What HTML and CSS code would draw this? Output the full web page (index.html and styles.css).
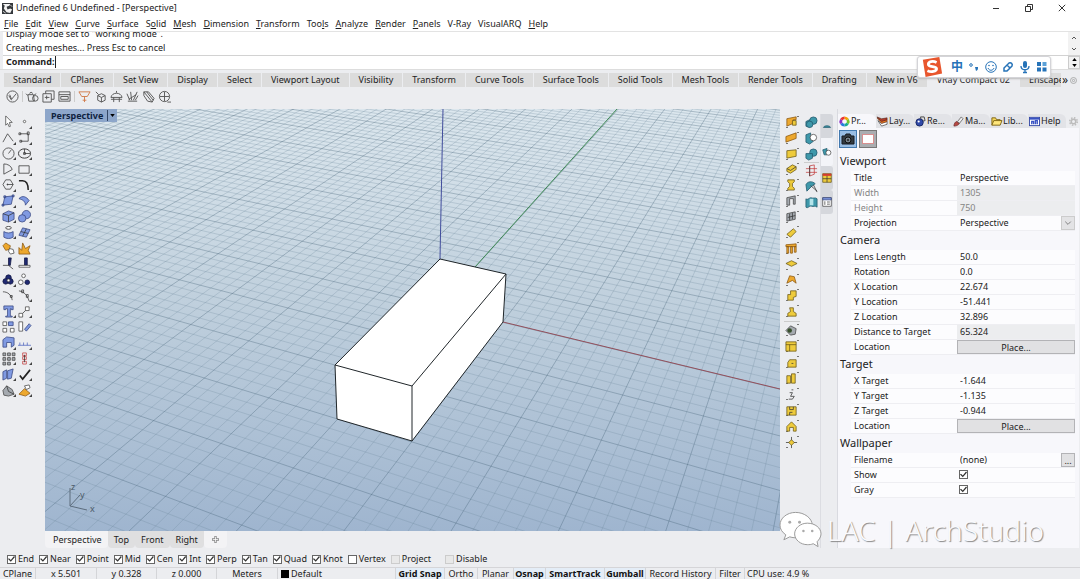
FILE: index.html
```html
<!DOCTYPE html>
<html lang="en">
<head>
<meta charset="utf-8">
<title>Undefined 6 Undefined - [Perspective]</title>
<link rel="stylesheet" href="styles.css">
</head>
<body>
<header class="titlebar">
  <svg class="app-icon" viewBox="0 0 12 12"><rect width="12" height="12" fill="#34383c"/><path d="M1 1l2 2-1 3 3 4 4 1 2-4-2-1-3 1-1-3 3-1 1-2" fill="#f4f4f4"/><path d="M1 9l3 2M9 2l2 2" stroke="#ddd"/></svg>
  <h1>Undefined 6 Undefined - [Perspective]</h1>
  <div class="win-buttons">
    <button aria-label="Minimize"><svg viewBox="0 0 8 8"><path d="M1 4.500h6"/></svg></button>
    <button aria-label="Restore"><svg viewBox="0 0 8 8"><path d="M.5 2.500h5v5h-5zM2.500 2.500v-2h5v5h-2"/></svg></button>
    <button aria-label="Close"><svg viewBox="0 0 8 8"><path d="M.8.8l6.400 6.400M7.200.8L.8 7.200"/></svg></button>
  </div>
</header>
<nav class="menubar">
  <button><u>F</u>ile</button><button><u>E</u>dit</button><button><u>V</u>iew</button><button><u>C</u>urve</button><button><u>S</u>urface</button><button>S<u>o</u>lid</button><button><u>M</u>esh</button><button><u>D</u>imension</button><button><u>T</u>ransform</button><button>Too<u>l</u>s</button><button><u>A</u>nalyze</button><button><u>R</u>ender</button><button><u>P</u>anels</button><button>V-Ray</button><button>VisualARQ</button><button><u>H</u>elp</button>
</nav>
<section class="console">
  <div class="history">
    <div class="history-lines"><p>Display mode set to "working mode".</p><p>Creating meshes... Press Esc to cancel</p></div>
    <div class="scroller"><svg viewBox="0 0 6 4"><path d="M1 3l2-2 2 2"/></svg><svg viewBox="0 0 6 4"><path d="M1 1l2 2 2-2"/></svg></div>
  </div>
  <div class="command">
    <label for="cmd">Command:</label><span class="caret"></span><input id="cmd" type="text">
    <div class="spinner"><svg viewBox="0 0 6 4"><path d="M0 4l3-4 3 4z"/></svg><svg viewBox="0 0 6 4"><path d="M0 0l3 4 3-4z"/></svg></div>
  </div>
</section>
<div class="toolbar-tabs">
  <button>Standard</button><button>CPlanes</button><button>Set View</button><button>Display</button><button>Select</button><button>Viewport Layout</button><button>Visibility</button><button>Transform</button><button>Curve Tools</button><button>Surface Tools</button><button>Solid Tools</button><button>Mesh Tools</button><button>Render Tools</button><button>Drafting</button><button>New in V6</button><button class="active">VRay Compact 02</button><button class="last">Enscape</button>
  <span class="more">»</span>
  <svg class="gear" viewBox="0 0 12 12"><circle cx="6" cy="6" r="4" /><circle cx="6" cy="6" r="1.500"/></svg>
</div>
<div class="toolbar" id="vray"></div>
<main class="workspace">
  <div class="palette" id="left"></div>
  <section class="stage">
    <div class="viewport">
      <svg class="scene" id="scene" viewBox="0 0 735 422" preserveAspectRatio="xMidYMid slice">
        <defs><linearGradient id="sky" x1="0" y1="0" x2="0" y2="1"><stop offset="0" stop-color="#dce7ee"/><stop offset=".45" stop-color="#c0d0dd"/><stop offset="1" stop-color="#9fb5cf"/></linearGradient></defs>
        <rect width="735" height="422" fill="url(#sky)"/>
        <path id="minor" class="minor"/>
        <path id="major" class="major"/>
        <path class="axis-z" d="M395 150L398 0"/>
        <path class="axis-y" d="M430 158L572 0"/>
        <path class="axis-x" d="M458 213L735 280"/>
        <path class="box" d="M395 150L461 165L458 213L367 332L292 310L290 256Z"/>
        <path class="box" d="M290 256L367 277L461 165M367 277V332"/>
        <path class="gizmo" d="M25 379v18l17 4M25 397l10-11"/>
        <text x="26" y="381">z</text><text x="35" y="389">y</text><text x="45" y="403">x</text>
      </svg>
      <div class="view-title"><button>Perspective</button><button class="drop" aria-label="Viewport menu"><svg viewBox="0 0 6 4"><path d="M0 0h6l-3 4z"/></svg></button></div>
    </div>
    <div class="view-tabs"><button class="active">Perspective</button><button>Top</button><button>Front</button><button>Right</button><button class="active add" aria-label="Add viewport"><svg viewBox="0 0 9 9"><path d="M4.500 0v9M0 4.500h9" stroke="#888" stroke-width="3"/><path d="M4.500 1v7M1 4.500h7" stroke="#fff"/></svg></button></div>
  </section>
  <aside class="side-tools">
    <div class="col col-a"><div class="group g13" id="arq1"></div><div class="group g8" id="arq2"></div></div>
    <div class="col col-b"><div class="group g3" id="sol1"></div><div class="group g3" id="sol2"></div></div>
    <div class="col col-c" id="side-tabs"></div>
  </aside>
  <aside class="panel">
    <div class="panel-tabs">
      <button class="active"><svg viewBox="0 0 12 12"><g fill="none" stroke-width="3"><path d="M6 2a4 4 0 0 1 3.500 2" stroke="#f5a000"/><path d="M9.500 4a4 4 0 0 1 0 4" stroke="#79c52c"/><path d="M9.500 8A4 4 0 0 1 6 10" stroke="#19ad91"/><path d="M6 10a4 4 0 0 1-3.500-2" stroke="#247ce0"/><path d="M2.500 8a4 4 0 0 1 0-4" stroke="#8c32c4"/><path d="M2.500 4A4 4 0 0 1 6 2" stroke="#e93434"/></g></svg>Pr...</button>
      <button><svg viewBox="0 0 12 12"><path d="M1 5l4 6 6-2V6l-6 2z" fill="#fff" stroke="#333" stroke-width=".7"/><path d="M0 2l5 6 6-2V4L5 5z" fill="#f47b20" stroke="#6b2d14" stroke-width=".6"/><path d="M0 1l5 5 6-2V2L5 3z" fill="#b23c2c" stroke="#472016" stroke-width=".6"/></svg>Lay...</button>
      <button><svg viewBox="0 0 12 12"><path d="M6 1h4l1 4-4 1z" fill="#ddd" stroke="#444"/><circle cx="5" cy="7" r="4" fill="#3049a8" stroke="#172663"/><circle cx="4" cy="6" r="1.200" fill="#fff"/></svg>Re...</button>
      <button><svg viewBox="0 0 12 12"><path d="M1 11c0-3 2-5 3-5l3 2c-1 2-3 3-6 3z" fill="#b44843" stroke="#692020" stroke-width=".7"/><path d="M5 6l4-5 2 2-4 5z" fill="#eee" stroke="#555" stroke-width=".8"/></svg>Ma...</button>
      <button><svg viewBox="0 0 12 12"><path d="M1 10V2h4l1 2h4v2" fill="#f7d85c" stroke="#7b6111"/><path d="M1 10l2-5h9l-2 5z" fill="#ffe77c" stroke="#7b6111"/></svg>Lib...</button>
      <button><svg viewBox="0 0 12 12"><rect x=".5" y="1.500" width="11" height="9" fill="#fff" stroke="#3448a6"/><path d="M1 2h10v2H1z" fill="#3953c4"/><path d="M3 9V6h2v3M7 9V5h2v4" stroke="#3953c4" stroke-width="1.500" fill="none"/></svg>Help</button>
      <svg class="gear2" viewBox="0 0 12 12"><circle cx="6" cy="6" r="5" stroke-dasharray="2 1.930" stroke-width="2"/><circle cx="6" cy="6" r="3" stroke-width="2"/></svg>
    </div>
    <div class="panel-body">
      <div class="modes">
        <button class="active" aria-label="Camera"><svg viewBox="0 0 14 12"><path d="M1 3h3l1-2h4l1 2h3v8H1z" fill="#333b42" stroke="#161b20"/><circle cx="7" cy="7" r="3" fill="#77828c" stroke="#111"/><circle cx="7" cy="7" r="1" fill="#222"/></svg></button>
        <button aria-label="Frame"><svg viewBox="0 0 14 12"><rect x="1.500" y="1.500" width="11" height="9" fill="#fff" stroke="#d88f8f"/></svg></button>
      </div>
      <form class="props">
        <h2>Viewport</h2>
        <div class="row"><label for="title">Title</label><input id="title" value="Perspective"></div>
        <div class="row off"><label for="width">Width</label><input id="width" value="1305" disabled></div>
        <div class="row off"><label for="height">Height</label><input id="height" value="750" disabled></div>
        <div class="row"><label for="proj">Projection</label><div class="pick"><select id="proj"><option>Perspective</option></select><svg viewBox="0 0 12 13"><path d="M3 5l3 3 3-3"/></svg></div></div>
        <h2>Camera</h2>
        <div class="row"><label for="lens">Lens Length</label><input id="lens" value="50.0"></div>
        <div class="row"><label for="rot">Rotation</label><input id="rot" value="0.0"></div>
        <div class="row"><label for="xl">X Location</label><input id="xl" value="22.674"></div>
        <div class="row"><label for="yl">Y Location</label><input id="yl" value="-51.441"></div>
        <div class="row"><label for="zl">Z Location</label><input id="zl" value="32.896"></div>
        <div class="row"><label for="dist">Distance to Target</label><input id="dist" class="fixed" value="65.324" readonly></div>
        <div class="row"><label for="place1">Location</label><button type="button" id="place1">Place...</button></div>
        <h2>Target</h2>
        <div class="row"><label for="xt">X Target</label><input id="xt" value="-1.644"></div>
        <div class="row"><label for="yt">Y Target</label><input id="yt" value="-1.135"></div>
        <div class="row"><label for="zt">Z Target</label><input id="zt" value="-0.944"></div>
        <div class="row"><label for="place2">Location</label><button type="button" id="place2">Place...</button></div>
        <h2>Wallpaper</h2>
        <div class="row"><label for="file">Filename</label><div class="pick"><input id="file" value="(none)"><button type="button" class="browse">...</button></div></div>
        <div class="row"><label for="show">Show</label><input id="show" type="checkbox" checked></div>
        <div class="row"><label for="gray">Gray</label><input id="gray" type="checkbox" checked></div>
      </form>
    </div>
  </aside>
  <div class="watermark">
    <svg viewBox="0 0 44 38"><path d="M17 1C8 1 1 7 1 14c0 4 2 7 6 10l-2 5 6-3c3 1 6 1 9 1 8-1 14-7 14-13C34 7 26 1 17 1z"/><path d="M29 12c-7 0-13 5-13 11s6 11 13 11c2 0 4 0 6-1l5 3-1-5c2-2 4-5 4-8 0-6-6-11-14-11z"/><g class="eyes"><circle cx="11" cy="11" r="1.500"/><circle cx="21" cy="11" r="1.500"/><circle cx="25" cy="20" r="1.300"/><circle cx="34" cy="20" r="1.300"/></g></svg>
    <span>LAC | ArchStudio</span>
  </div>
</main>
<div class="osnap">
  <label><input type="checkbox" checked>End</label><label><input type="checkbox" checked>Near</label><label><input type="checkbox" checked>Point</label><label><input type="checkbox" checked>Mid</label><label><input type="checkbox" checked>Cen</label><label><input type="checkbox" checked>Int</label><label><input type="checkbox" checked>Perp</label><label><input type="checkbox" checked>Tan</label><label><input type="checkbox" checked>Quad</label><label><input type="checkbox" checked>Knot</label><label><input type="checkbox">Vertex</label><label><input type="checkbox" disabled>Project</label><label class="apart"><input type="checkbox" disabled>Disable</label>
</div>
<footer class="status">
  <span>CPlane</span><span>x 5.501</span><span>y 0.328</span><span>z 0.000</span><span>Meters</span><span class="layer"><i></i>Default</span>
  <button class="on">Grid Snap</button><button>Ortho</button><button>Planar</button><button class="on">Osnap</button><button class="on">SmartTrack</button><button class="on">Gumball</button><button>Record History</button><button>Filter</button><span class="cpu">CPU use: 4.9 %</span>
</footer>
<div class="ime">
  <svg class="ime-logo" viewBox="0 0 24 24"><path d="M2 4l18-3 3 18-18 4z" fill="#e8562d"/><path d="M17 7c-4-2-9-1-9 2 0 4 9 1 9 5 0 3-6 4-10 2" fill="none" stroke="#fff" stroke-width="3"/></svg>
  <span>中</span>
  <svg viewBox="0 0 12 12"><circle cx="3" cy="4" r="1.300" fill="none" stroke="#2673b8"/><path d="M7 6h3c0 2 0 3-2 4" fill="#2673b8"/></svg>
  <svg viewBox="0 0 12 12"><g fill="none" stroke="#2673b8"><circle cx="6" cy="6" r="5.300"/><path d="M3 7c1 3 5 3 6 0"/></g><circle cx="4" cy="4.500" r=".8" fill="#2673b8"/><circle cx="8" cy="4.500" r=".8" fill="#2673b8"/></svg>
  <svg viewBox="0 0 12 12"><path d="M2 10V7l5-5c2-1 4 1 3 3l-5 5zM5 4l3 3" fill="none" stroke="#2673b8" stroke-width="1.500"/></svg>
  <svg viewBox="0 0 12 12"><rect x="4" y="0" width="4" height="7" rx="2" fill="#2673b8"/><path d="M2 5c0 5 8 5 8 0M6 9v3M4 11.500h4" fill="none" stroke="#2673b8" stroke-width="1.300"/></svg>
  <svg viewBox="0 0 12 12"><path d="M1 1h4v4H1zM1 6.500h4v4H1zM6.500 6.500h4v4h-4z" fill="#2673b8"/><path d="M6.500 1h4v4h-4z" fill="#5ba1d8"/></svg>
</div>
<script src="app.js"></script>
</body>
</html>
```
FILE: styles.css
```css
* { box-sizing: border-box; }
body { margin: 0; height: 100vh; overflow: hidden; display: flex; flex-direction: column; position: relative; background: #ecedf0; color: #222; font: 9px/12px "Noto Sans", "Open Sans", "Noto Sans CJK SC", sans-serif; }
button, input, select { font: inherit; color: inherit; margin: 0; padding: 0; border: 0; background: none; min-width: 0; }
h1, h2, p { margin: 0; font-weight: 400; }
svg { display: block; overflow: visible; }
u { text-underline-offset: 1px; }

.titlebar { display: flex; align-items: center; height: 16px; padding: 0 14px 0 2px; background: #fff; flex: none; }
.app-icon { width: 11px; height: 11px; margin-right: 3px; }
.titlebar h1 { font-size: 9px; }
.win-buttons { margin-left: auto; display: flex; gap: 25px; }
.win-buttons svg { width: 8px; height: 8px; fill: none; stroke: #333; stroke-width: 1; }
.menubar { display: flex; gap: 7px; height: 15px; padding: 0 4px; align-items: center; background: #fff; flex: none; white-space: nowrap; }

.console { flex: none; background: #fff; border-top: 1px solid #e3e3e3; border-left: 3px solid #ecedf0; }
.history { display: flex; height: 23px; }
.history-lines { flex: 1; height: 23px; overflow: hidden; display: flex; flex-direction: column; justify-content: flex-end; padding-left: 3px; line-height: 14px; }
.scroller, .spinner { width: 12px; display: flex; flex-direction: column; align-items: center; justify-content: space-around; background: #f2f2f2; }
.scroller svg { width: 6px; height: 4px; fill: none; stroke: #555; }
.spinner svg { width: 5px; height: 3px; }
.command { display: flex; height: 14px; align-items: flex-start; border-top: 1px solid #d2d2d2; padding-left: 3px; line-height: 11px; }
.command label { font-weight: 700; }
.command input { flex: 1; outline: 0; height: 12px; }
.caret { width: 1px; height: 12px; background: #222; margin-left: 1px; }
.spinner { height: 13px; border: 1px solid #ccc; }

.toolbar-tabs { flex: none; display: flex; align-items: center; gap: 1px; height: 18px; padding: 3px 2px 0 4px; border-top: 1px solid #ddd; white-space: nowrap; overflow: hidden; }
.toolbar-tabs button { height: 14px; padding: 0 9px; background: #dcdcdc; }
.toolbar-tabs button.active { background: #ecedf0; }
.toolbar-tabs button.last { flex: 1 1 0; overflow: hidden; text-align: left; padding-right: 0; }
.more { font-size: 12px; }
.gear { width: 9px; height: 9px; flex: none; fill: none; stroke: #999; }

.toolbar { flex: none; display: flex; gap: 3px; height: 18px; padding: 0 6px; align-items: center; }
.toolbar svg { width: 13px; height: 13px; fill: none; stroke: #555; }
.toolbar .bar { width: 1px; height: 11px; background: #ccc; }

.workspace { flex: 1; min-height: 0; display: flex; padding-top: 4px; position: relative; }
.palette { width: 45px; flex: none; display: grid; grid-template-columns: 16px 16px; grid-template-rows: repeat(18, 1fr); height: 284px; margin-top: 5px; }
.palette button, .group button { display: grid; place-items: center; }
.palette button { position: relative; }
.palette button.fly::after { content: ""; position: absolute; right: 0; bottom: 1px; border-left: 3px solid transparent; border-bottom: 3px solid #444; }
.palette svg { width: 13px; height: 13px; }
.palette path, .palette circle, .group path, .group circle { stroke-width: .8; }
.k { fill: none; stroke: #333; }
.n { fill: #202a72; stroke: #101640; }
.b { fill: #809ae2; stroke: #34447d; }
.w { fill: #fff; stroke: #444; }
.y { fill: #eecb3c; stroke: #665516; }
.o { fill: #eda82e; stroke: #885510; }
.t { fill: #3e98aa; stroke: #20576a; }
.r { fill: none; stroke: #c33c3c; }
.s { fill: #a5aab0; stroke: #444; }

.stage { flex: 1; min-width: 0; display: flex; flex-direction: column; }
.viewport { flex: 1; min-height: 0; position: relative; overflow: hidden; }
.scene { width: 100%; height: 100%; overflow: hidden; }
.minor, .major { fill: none; }
.minor { stroke: #688297; stroke-opacity: .36; stroke-width: .7; }
.major { stroke: #405e72; stroke-opacity: .42; stroke-width: .8; }
.axis-x { stroke: #94505c; }
.axis-y { stroke: #3f8a55; }
.axis-z { stroke: #414d9c; }
.box { fill: #fff; stroke: #20262a; stroke-linejoin: round; }
.box + .box { fill: none; }
.gizmo { fill: none; stroke: #5c6c7d; }
.scene text { font-size: 9px; fill: #4c5a69; }
.view-title { position: absolute; left: 0; top: 0; display: flex; background: #8da6ca; height: 13px; align-items: center; }
.view-title button { padding: 0 4px 0 6px; font-weight: 700; color: #10233f; }
.view-title .drop { padding: 0 2px; height: 11px; border-left: 1px solid #344765; }
.view-title svg { width: 5px; height: 3px; }
.view-tabs { height: 17px; flex: none; display: flex; }
.view-tabs button { padding: 0 6px; background: #dfdfe0; border-radius: 0 0 4px 4px; }
.view-tabs button:first-child { padding-left: 8px; }
.view-tabs button.active { background: #f3f3f5; }
.view-tabs .add { padding: 0 8px; }
.view-tabs svg { width: 7px; height: 7px; }

.side-tools { flex: none; width: 55px; display: flex; padding: 5px 3px 0 4px; }
.col-a { width: 16px; }
.col-b { width: 20px; padding-left: 4px; }
.col-c { width: 12px; margin-left: 1px; border-left: 1px solid #dcdde2; }
.group { display: grid; grid-auto-rows: 1fr; }
.group + .group { border-top: 1px solid #ccc; }
.group svg { width: 13px; height: 13px; }
.g13 { height: 205px; margin-bottom: 2px; }
.g8 { height: 129px; }
.g3 { height: 48px; }
.col-a button { background: linear-gradient(#777, #777) 13px 2px / 2px 1px no-repeat, linear-gradient(#777, #777) 2px 13px / 2px 1px no-repeat; }
.col-c button { display: grid; place-items: center; width: 12px; height: 24px; background: #d5d7dc; border-radius: 0 3px 3px 0; }
.col-c button:nth-child(2) { background: #f3f4f8; height: 28px; }
.col-c svg { width: 10px; height: 10px; }

.panel { flex: 1 0 243px; max-width: 243px; display: flex; flex-direction: column; border-left: 1px solid #d9dae0; margin-left: 2px; }
.panel-tabs { display: flex; height: 19px; padding-top: 5px; }
.panel-tabs button { display: flex; align-items: center; gap: 1px; width: 38px; flex: none; padding-left: 1px; background: #e2e3e7; border-radius: 0 6px 0 0; white-space: nowrap; }
.panel-tabs button.active { background: #f7f7fb; }
.panel-tabs svg { width: 11px; height: 11px; flex: none; }
.panel-tabs .gear2 { fill: none; stroke: #bbb; width: 9px; height: 9px; margin: 3px 0 0 3px; }
.panel-body { flex: 1; background: #f7f7fb; margin-right: 1px; min-height: 0; padding: 2px 4px 0 1px; }
.modes { display: flex; gap: 2px; height: 18px; }
.modes button { width: 18px; height: 18px; border: 1px solid #777; background: #aaadb0; display: grid; place-items: center; }
.modes .active { background: #98bde4; border-color: #4279af; }
.modes svg { width: 14px; height: 12px; }
.props { padding-top: 4px; }
.props h2 { height: 19px; font-size: 11px; line-height: 17px; padding-left: 1px; }
.row { display: grid; grid-template-columns: 106px 1fr; height: 15px; margin-left: 12px; background: #fcfcfe; border-bottom: 1px solid #eeeef2; }
.row label { padding-left: 3px; line-height: 14px; }
.row input, .row select { width: 100%; height: 14px; padding: 0 0 1px 3px; appearance: none; }
.row.off { color: #858585; }
.row.off input, .row .fixed { background: #ecedef; }
.row button { background: #e1e1e3; border: 1px solid #b3b3b6; line-height: 11px; height: 14px; }
.pick { display: flex; }
.pick select, .pick input { flex: 1; width: 0; }
.pick svg { width: 14px; height: 14px; background: #e3e3e5; border: 1px solid #ccc; fill: none; stroke: #777; }
.pick .browse { width: 14px; }
.row input[type="checkbox"], .osnap input { appearance: none; width: 9px; height: 9px; border: 1px solid #666; background: #fff; padding: 0; flex: none; }
.row input[type="checkbox"] { margin: 2px 0 0 2px; }
input[type="checkbox"]:checked::after { content: ""; display: block; width: 7px; height: 7px; background: #333; clip-path: polygon(0 50%, 14% 38%, 40% 64%, 86% 8%, 100% 20%, 40% 90%); }

.watermark { position: absolute; right: 36px; bottom: -1px; display: flex; align-items: center; gap: 5px; font-size: 28px; line-height: 36px; font-weight: 300; color: #fafafd; text-shadow: 1px 1px 1px #888; pointer-events: none; white-space: nowrap; }
.watermark svg { width: 43px; height: 38px; fill: #fff; stroke: #999; }
.watermark .eyes { fill: #aaa; stroke: none; }

.osnap { flex: none; height: 20px; display: flex; align-items: center; gap: 5px; padding: 3px 7px 0; white-space: nowrap; border-bottom: 1px solid #d5d5d8; }
.osnap label { display: flex; align-items: center; gap: 2px; }
.osnap .apart { margin-left: 9px; }
.osnap input:disabled { border-color: #ccc; background: #e8e8e8; }

.status { flex: none; height: 11px; display: grid; grid-template-columns: 36px 61px 60px 60px 61px 118px 49px 33px 36px 32px 59px 41px 70px 29px 1fr; overflow: hidden; white-space: nowrap; }
.status > * { border-right: 1px solid #d4d5d8; text-align: center; line-height: 12px; }
.status .layer { display: flex; align-items: center; gap: 2px; padding-left: 3px; }
.layer i { width: 8px; height: 8px; background: #000; }
.status .on { font-weight: 700; background: #e4edf7; color: #111; }
.status .cpu { text-align: left; padding-left: 2px; border: 0; }

.ime { position: absolute; right: 29px; top: 56px; width: 134px; height: 22px; display: flex; align-items: center; gap: 5px; padding: 0 3px; background: #fff; border: 1px solid #d4d4d8; border-radius: 3px; box-shadow: 0 1px 2px #bbb; }
.ime svg { width: 12px; height: 12px; flex: none; }
.ime .ime-logo { width: 22px; height: 22px; margin-right: 3px; }
.ime span { font-weight: 700; font-size: 12px; line-height: 16px; color: #2673b8; }
```
FILE: app.js
```js
// Perspective camera: position, unit axes, focal length in scene units.
const eye = [22.674, -51.441, 32.896];
const fwd = [-0.3723, 0.7701, -0.518];
const right = [0.9003, 0.4352, 0];
const up = [-0.2254, 0.4664, 0.8554];
const focal = 879;
const dot = (a, b) => a[0] * b[0] + a[1] * b[1] + a[2] * b[2];

function view(x, y) {
  const p = [x - eye[0], y - eye[1], -eye[2]];
  return [dot(p, right), dot(p, up), dot(p, fwd)];
}
function segment(a, b) {
  const near = 8;
  if (a[2] < near && b[2] < near) return '';
  const cut = (p, q) => {
    const t = (near - p[2]) / (q[2] - p[2]);
    return p.map((v, i) => v + t * (q[i] - v));
  };
  if (a[2] < near) a = cut(a, b);
  if (b[2] < near) b = cut(b, a);
  const px = p => (367.5 + focal * p[0] / p[2]).toFixed(1) + ' ' + (211 - focal * p[1] / p[2]).toFixed(1);
  return 'M' + px(a) + 'L' + px(b);
}
let minor = '', major = '';
const size = 100;
for (let i = -size; i <= size; i++) {
  const s = segment(view(i, -size), view(i, size)) + segment(view(-size, i), view(size, i));
  if (i % 5) minor += s; else major += s;
}
document.getElementById('minor').setAttribute('d', minor);
document.getElementById('major').setAttribute('d', major);

const icon = body => `<svg viewBox="0 0 14 14">${body}</svg>`;
const p = (cls, d) => `<path class="${cls}" d="${d}"/>`;
const c = (cls, x, y, r) => `<circle class="${cls}" cx="${x}" cy="${y}" r="${r}"/>`;
function fill(id, items, cls = '') {
  document.getElementById(id).innerHTML = items.map(([name, body, plain]) =>
    name ? `<button class="${plain ? '' : cls}" aria-label="${name}">${icon(body)}</button>` : '<span class="bar"></span>').join('');
}

fill('vray', [
  ['V-Ray', c('', 7, 7, 6) + p('', 'M4 5l2 5 5-6M3 6l3 5')],
  [''],
  ['Render', p('', 'M2 5h6l1 7H3zM2 6L0 4M8 6l3-2M4 4c0-2 3-2 3 0') + c('', 10, 9, 3)],
  ['Frame buffer', p('', 'M1 4h9v9H1zM4 4V1h9v9h-3M3 8h5M5 6v4')],
  ['Window', p('', 'M1 2h12v10H1zM1 5h12M3 7h8v3H3z')],
  [''],
  ['Light', '<path d="M1 2h12l-3 5H4zM7 7v6M5 11h4" stroke="#d17a4a"/>'],
  ['Proxy', p('', 'M2 2l3 3M4 6l4-2 4 2v5l-4 2-4-2zM4 6l4 2 4-2M8 8v5')],
  ['Dome', p('', 'M1 8c1-6 11-6 12 0zM1 10h12M4 8v5M10 8v5M7 3V1')],
  ['Fur', p('', 'M2 12h10M4 11L1 4M6 11L5 2M8 11l4-9M10 11l3-5M3 10l8-5')],
  ['Clipper', p('', 'M2 2l5 0 6 7-2 4-5-1-4-6zM2 2l9 11M5 2l7 9')],
  ['Plane', c('', 7, 7, 5.5) + p('', 'M7 2v10M2 7h10M10 13h4')]
]);

fill('left', [
  ['Select', p('w', 'M4 1v10l2-2 2 4 1-1-1-4h3z'), 1], ['Point', c('w', 7, 7, 1.3)],
  ['Polyline', p('k', 'M1 12L6 3l6 8')], ['Curve', p('k', 'M2 3h9v8H3M1 2h2v2H1zM10 1h2v3h-2zM2 10h2v2H2z')],
  ['Circle', c('k', 7, 7, 6) + p('k', 'M7 7l3-4')], ['Ellipse', '<ellipse class="k" cx="7" cy="7" rx="6.500" ry="5"/>' + p('k', 'M7 2v5h6M6 6h2v2H6z')],
  ['Arc', p('k', 'M2 1v11l9-5C10 3 6 1 2 1')], ['Rectangle', p('k', 'M1 3h11v8H1z')],
  ['Polygon', p('k', 'M4 2h5l3 5-3 5H4L1 7zM5 7h7M6 6v2')], ['Fillet', '<path d="M1 3h4c5 0 6 4 6 10" fill="none" stroke="#222" style="stroke-width:1.6"/>'],
  ['Surface', p('b', 'M3 3l9-1-2 9-9 1zM2 2h2v2H2zM11 1h2v2h-2zM0 11h2v2H0z')], ['Sweep', p('b', 'M1 5c4-4 8-2 11 2l-4 5C8 8 5 6 1 5z')],
  ['Box', p('b', 'M1 4l6-3 6 2v7l-6 3-6-2z') + p('k', 'M1 4l6 2 6-3M7 6v7')], ['Sphere', c('b', 9, 5, 4.5) + c('b', 4.5, 9, 4)],
  ['Cylinder', p('b', 'M2 6c3 2 7 2 10 0v6c-3 2-7 2-10 0z') + '<ellipse class="w" cx="7" cy="2" rx="3" ry="1.500"/>'], ['Mesh', p('b', 'M5 2l8 2-4 8-8-2z') + p('k', 'M3 6l8 2M9 3l-4 8')],
  ['Union', p('o', 'M1 4l3-3 3 2 2 1-1 4-4 1z') + p('w', 'M8 7l4 1 1 4-4 1-2-3z'), 1], ['Explode', p('o', 'M1 13V6l3 3 1-8 3 6 5-3-2 5 2 4z'), 1],
  ['Trim', p('n', 'M7 1h3L9 9H7z') + p('k', 'M1 9h6l5 4'), 1], ['Split', p('n', 'M7 1h3v8H7z') + p('w', 'M1 9h12v2H1z'), 1],
  ['Group', c('n', 7, 5, 3) + c('n', 4, 9, 3) + c('n', 9, 9, 3) + c('w', 7, 8, 1.5)], ['Ungroup', c('w', 6, 3, 2) + c('w', 3, 10, 2.5) + c('n', 10, 10, 2.5), 1],
  ['Control points', p('k', 'M1 3c5 0 9 3 10 9M9 7h2v2H9z'), 1], ['Edit points', p('k', 'M1 2c6 1 9 5 11 11M4 1h2v3H4zM9 6h2v3H9z')],
  ['Text', p('b', 'M2 1h10v4h-2V4H9v8h2v1H4v-1h2V4H4v1H2z')], ['Move', p('w', 'M1 9h4v4H1zM8 2h4v4H8z') + p('k', 'M5 9l3-3')],
  ['Copy', p('w', 'M1 2h4v4H1zM1 9h4v4H1zM9 9h4v4H9z') + p('b', 'M7 2h5v4H7z'), 1], ['Rotate', p('w', 'M1 2h4v10H1z') + p('b', 'M7 10l5-6 2 2-5 6z'), 1],
  ['Block', p('b', 'M1 4l4-3 8 1v8l-3 2V7H5v5H1z')], ['Align', '<path d="M0 10h14M2 7v3M6 7v3M10 7v3" stroke="#4b62be" stroke-width="1.500"/>'],
  ['Array', p('s', 'M1 1h3v3H1zM6 1h3v3H6zM11 1h3v3h-3zM1 6h3v3H1zM6 6h3v3H6zM11 6h3v3h-3zM1 11h3v3H1zM6 11h3v3H6z')], ['Chain', p('r', 'M5 1h4v3H5zM5 5h4v3H5zM5 10h4v3H5z') + p('k', 'M7 3v8')],
  ['Sections', p('b', 'M1 4l4-2v9l-4 2zM6 3l6-2-2 10-4 1z')], ['Check', '<path d="M2 8l3 4 8-10" fill="none" stroke="#222" style="stroke-width:1.8"/>'],
  ['Solid', p('s', 'M1 7l4-5 6 4 2 5-6 2-5-1z') + p('k', 'M5 2l2 6 6 3')], ['Cone', p('o', 'M1 11l6-6 6 5-5 3z') + p('w', 'M7 2l5-1 1 3-4 2z')]
], 'fly');

fill('arq1', [
  ['Wall', p('o', 'M2 4l10-2v3H9v4l-7 3z') + p('y', 'M8 6h4v5H8z')], ['Straight wall', p('o', 'M1 6l11-4v6L1 12z')], ['Curtain wall', p('y', 'M2 4l10-1v7L2 12z')],
  ['Slab', p('y', 'M2 6l6-4 4 2v3l-6 4-4-2z') + p('k', 'M2 6l4 2 6-4')], ['Column', p('y', 'M3 2h7v2L8 6v3l2 2v2H3v-2l2-2V6L3 4z')],
  ['Door', p('s', 'M2 4l9-2v9H9V5H5v7H2z')], ['Window', p('s', 'M2 4l9-2v8l-9 2z') + p('k', 'M5 4v7M8 3v7M3 8l8-2')],
  ['Beam', p('y', 'M2 9l7-6 3 3-6 6z')], ['Railing', p('o', 'M1 3l11-1v3H1zM2 5h2v7H2zM6 5h2v7H6zM10 5h2v6h-2z')], ['Opening', p('y', 'M1 7l6-3 6 3-6 3z')],
  ['Roof', p('o', 'M2 11l3-8 5 1 2 7-4-3z')], ['Stair', p('y', 'M3 6h3V2h6v6L9 9v3H3z')], ['Furniture', p('y', 'M5 3h4v4l3 2v3H3V9l3-2z')]
]);
fill('arq2', [
  ['Terrain', p('s', 'M1 7l5-5 6 3-1 6-5 1z') + '<circle cx="5" cy="7" r="2.500" fill="#38502c"/>'], ['Table', p('y', 'M1 2h11v10H1zM1 5h11M5 5v7')], ['Tag', p('y', 'M5 4h7v8H3V7z') + p('k', 'M7 8h2')],
  ['Section', p('y', 'M2 4h4v8H2zM7 2h4v10H7z')], ['Dimension', p('k', 'M4 12h4l2-3H6l2-4H5M7 2h2')], ['Save', p('y', 'M2 3h10v9H2z') + p('k', 'M5 3v3h4V3M5 12V9h3')],
  ['House', p('y', 'M2 7l5-5 5 5v5H9V8H5v4H2z')], ['Pan', p('k', 'M7 1v12M1 7h12') + p('y', 'M4 7l3-3 3 3-3 3z')]
]);
fill('sol1', [
  ['Join', p('t', 'M1 6l4-2v8l-4-1z') + c('t', 9, 5, 4) + c('t', 5, 9, 3.5)], ['Subtract', p('t', 'M1 3l5-2v6l3 3-4 3-4-2z') + c('w', 9, 6, 3.5)], ['Intersect', c('t', 9, 5, 4) + p('t', 'M1 6h7v5l-4 2-3-2z')]
]);
fill('sol2', [
  ['Cut plane', p('r', 'M1 5h12M1 9h12M5 2l5-1v10l-5 2z') + p('k', 'M5 2v11')], ['Extract', p('t', 'M1 5c2-4 7-4 10-1l-4 3-5 5z') + p('k', 'M6 6l7 6M9 5l4 8')], ['Unroll', p('t', 'M1 3c2 2 4-2 6-1s4-1 6 1v9c-2-2-4 0-6-1s-4 3-6 1z') + '<path d="M5 3h4v7H5z" fill="#b4e4ea"/>']
]);
fill('side-tabs', [
  ['Pads', p('t', 'M2 9c1-3 9-3 10 0z')], ['Boolean', p('t', 'M1 4l6-2v9H3z') + c('w', 9, 8, 3.5)],
  ['Grid', p('y', 'M1 1h12v12H1z') + '<path d="M1 1h12v3H1z" fill="#d63a2e"/>' + p('k', 'M1 8h12M7 4v9')], ['List', p('w', 'M1 1h12v12H1z') + p('b', 'M1 1h12v3H1z') + p('k', 'M4 6v5M7 7h4M7 10h4')]
]);
```
